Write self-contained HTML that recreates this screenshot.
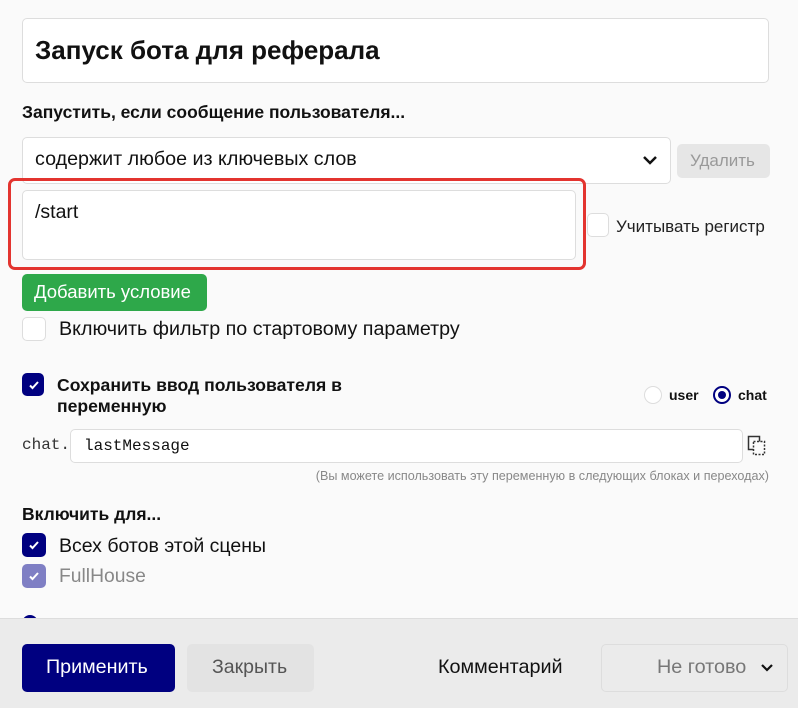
<!DOCTYPE html>
<html><head><meta charset="utf-8"><style>
*{box-sizing:border-box;margin:0;padding:0}
body{width:798px;height:708px;background:#fafafa;font-family:"Liberation Sans",Arial,sans-serif;color:#111;position:relative;overflow:hidden}
.a{position:absolute}
.box{background:#fff;border:1px solid #ddd;border-radius:5px}
.cb{position:absolute;width:24px;height:24px;border-radius:5px;border:1px solid #ddd;background:#fff}
.cb.on{background:#000080;border-color:#000080}
.cb.on svg{position:absolute;left:5px;top:5px}
.t{position:absolute;white-space:nowrap;line-height:1}
</style></head><body>
<div class="a box" style="left:22px;top:18px;width:747px;height:65px"></div>
<div class="t" style="left:35px;top:37px;font-size:26px;font-weight:bold">Запуск бота для реферала</div>
<div class="t" style="left:22px;top:104px;font-size:17.5px;font-weight:bold">Запустить, если сообщение пользователя...</div>
<div class="a box" style="left:22px;top:137px;width:649px;height:47px"></div>
<div class="t" style="left:35px;top:150px;font-size:19.7px">содержит любое из ключевых слов</div>
<svg class="a" style="left:642px;top:154px" width="16" height="12" viewBox="0 0 16 12"><path d="M2 3l6 6 6-6" fill="none" stroke="#111" stroke-width="2.5"/></svg>
<div class="a" style="left:677px;top:144px;width:93px;height:34px;background:#e6e6e6;border-radius:5px"></div>
<div class="t" style="left:690px;top:152px;font-size:17px;color:#999">Удалить</div>
<div class="a" style="left:8px;top:178px;width:578px;height:92px;border:3px solid #e3342f;border-radius:7px"></div>
<div class="a box" style="left:22px;top:190px;width:554px;height:70px"></div>
<div class="t" style="left:35px;top:203px;font-size:19.5px">/start</div>
<div class="cb" style="left:587px;top:213px;width:22px;height:24px"></div>
<div class="t" style="left:616px;top:218px;font-size:17px;color:#222">Учитывать регистр</div>
<div class="a" style="left:22px;top:274px;width:185px;height:37px;background:#2ea84a;border-radius:5px"></div>
<div class="t" style="left:34px;top:283px;font-size:18.5px;color:#fff">Добавить условие</div>
<div class="cb" style="left:22px;top:317px"></div>
<div class="t" style="left:59px;top:320px;font-size:19.7px">Включить фильтр по стартовому параметру</div>
<div class="cb on" style="left:22px;top:373px;width:22px;height:23px"><svg width="12" height="12" viewBox="0 0 12 12"><path d="M2 6.5l2.5 2.5L10 3" fill="none" stroke="#fff" stroke-width="2"/></svg></div>
<div class="t" style="left:57px;top:375px;font-size:17.6px;font-weight:bold;line-height:21px">Сохранить ввод пользователя в<br>переменную</div>
<div class="a" style="left:644px;top:386px;width:18px;height:18px;border-radius:50%;border:1px solid #ddd;background:#fff"></div>
<div class="t" style="left:669px;top:388px;font-size:14px;font-weight:bold">user</div>
<div class="a" style="left:713px;top:386px;width:18px;height:18px;border-radius:50%;border:2px solid #000080;background:#fff"><div class="a" style="left:3px;top:3px;width:8px;height:8px;border-radius:50%;background:#000080"></div></div>
<div class="t" style="left:738px;top:388px;font-size:14px;font-weight:bold">chat</div>
<div class="t" style="left:22px;top:437px;font-size:16px;font-family:'Liberation Mono',monospace;color:#333">chat.</div>
<div class="a box" style="left:70px;top:429px;width:673px;height:34px"></div>
<div class="t" style="left:84px;top:438px;font-size:16px;font-family:'Liberation Mono',monospace">lastMessage</div>
<svg class="a" style="left:747px;top:435px" width="20" height="22" viewBox="0 0 20 22"><rect x="1.5" y="1.5" width="11" height="13" fill="none" stroke="#333" stroke-width="1.5"/><rect x="6.5" y="6.5" width="11" height="13" fill="#fafafa" stroke="#333" stroke-width="1.5" stroke-dasharray="2 1.5"/></svg>
<div class="t" style="right:29px;top:470px;font-size:12.6px;color:#888">(Вы можете использовать эту переменную в следующих блоках и переходах)</div>
<div class="t" style="left:22px;top:506px;font-size:17.5px;font-weight:bold">Включить для...</div>
<div class="cb on" style="left:22px;top:533px"><svg width="12" height="12" viewBox="0 0 12 12"><path d="M2 6.5l2.5 2.5L10 3" fill="none" stroke="#fff" stroke-width="2"/></svg></div>
<div class="t" style="left:59px;top:537px;font-size:19.5px">Всех ботов этой сцены</div>
<div class="cb on" style="left:22px;top:564px;background:#7f7fc4;border-color:#7f7fc4"><svg width="12" height="12" viewBox="0 0 12 12"><path d="M2 6.5l2.5 2.5L10 3" fill="none" stroke="#fff" stroke-width="2"/></svg></div>
<div class="t" style="left:59px;top:567px;font-size:19.3px;color:#888">FullHouse</div>
<div class="a" style="left:22px;top:615px;width:16px;height:16px;border-radius:50%;background:#000080"></div>
<div class="a" style="left:0;top:618px;width:798px;height:90px;background:#ebebeb;border-top:1px solid #ddd"></div>
<div class="a" style="left:22px;top:644px;width:153px;height:48px;background:#000080;border-radius:5px"></div>
<div class="t" style="left:46px;top:658px;font-size:19.7px;color:#fff">Применить</div>
<div class="a" style="left:187px;top:644px;width:127px;height:48px;background:#e3e3e3;border-radius:5px"></div>
<div class="t" style="left:212px;top:658px;font-size:19.5px;color:#555">Закрыть</div>
<div class="t" style="left:438px;top:658px;font-size:19.8px">Комментарий</div>
<div class="a" style="left:601px;top:644px;width:187px;height:48px;border:1px solid #ddd;border-radius:5px"></div>
<div class="t" style="left:657px;top:658px;font-size:19.8px;color:#777">Не готово</div>
<svg class="a" style="left:760px;top:663px" width="14" height="10" viewBox="0 0 14 10"><path d="M2 2l5 5 5-5" fill="none" stroke="#111" stroke-width="2.2"/></svg>
</body></html>
